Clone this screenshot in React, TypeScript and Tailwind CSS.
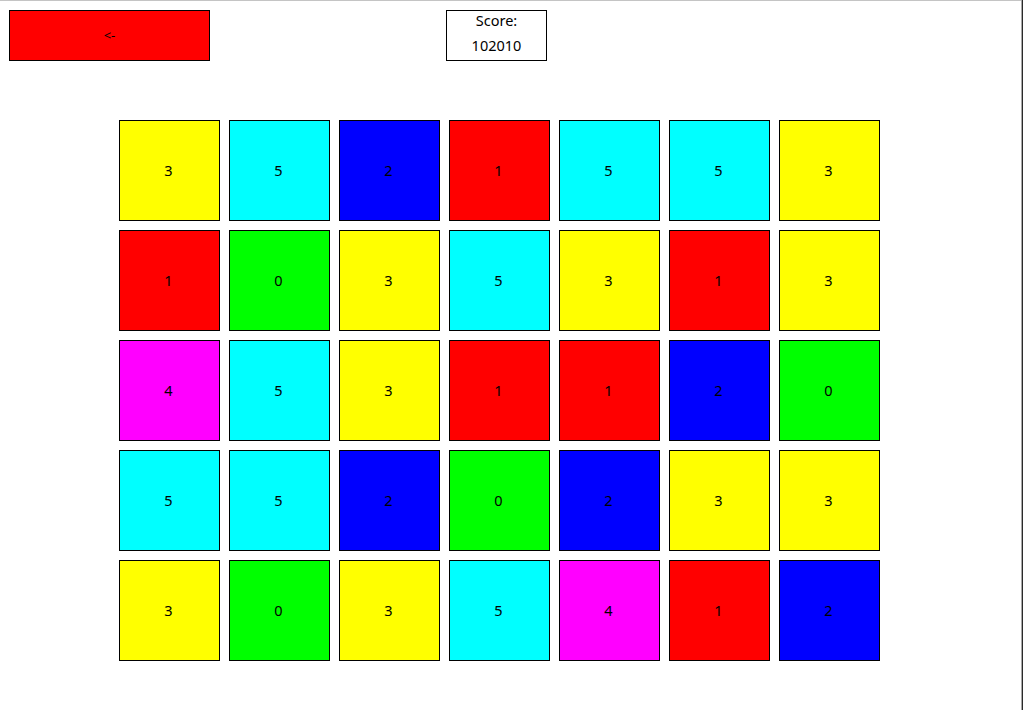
import React from "react";

const colorClass: Record<number, string> = {
  0: "bg-[#00ff00]",
  1: "bg-[#ff0000]",
  2: "bg-[#0000ff]",
  3: "bg-[#ffff00]",
  4: "bg-[#ff00ff]",
  5: "bg-[#00ffff]",
};

const board: number[][] = [
  [3, 5, 2, 1, 5, 5, 3],
  [1, 0, 3, 5, 3, 1, 3],
  [4, 5, 3, 1, 1, 2, 0],
  [5, 5, 2, 0, 2, 3, 3],
  [3, 0, 3, 5, 4, 1, 2],
];

export default function App() {
  return (
    <div
      className="flex w-[1023px] h-[710px] overflow-hidden bg-white text-black"
      style={{ fontFamily: '"Noto Sans", "Open Sans", sans-serif' }}
    >
      <div className="flex flex-col w-[1021px] h-full border-t border-[#c4c4c4] bg-white">
        <div className="flex items-start pt-[9px] pl-[9px]">
          <button className="w-[201px] h-[51px] border border-black bg-[#ff0000] text-[13px] flex items-center justify-center leading-none">
            &lt;-
          </button>
          <div className="ml-[236px] w-[101px] h-[51px] border border-black bg-white flex flex-col items-center justify-start text-[14.5px] leading-[25px] overflow-hidden">
            <span className="block -mt-[3px]">Score:</span>
            <span className="block">102010</span>
          </div>
        </div>
        <div className="flex flex-col gap-[9px] pl-[119px] pt-[59px]">
          {board.map((row, r) => (
            <div key={r} className="flex gap-[9px]">
              {row.map((v, c) => (
                <div
                  key={c}
                  className={`w-[101px] h-[101px] border border-black flex items-center justify-center pr-[2px] text-[14.5px] ${colorClass[v]}`}
                >
                  {v}
                </div>
              ))}
            </div>
          ))}
        </div>
      </div>
      <div className="w-px h-full bg-[#a8a8a8]" />
      <div className="w-px h-full bg-[#2a2a2a]" />
    </div>
  );
}
